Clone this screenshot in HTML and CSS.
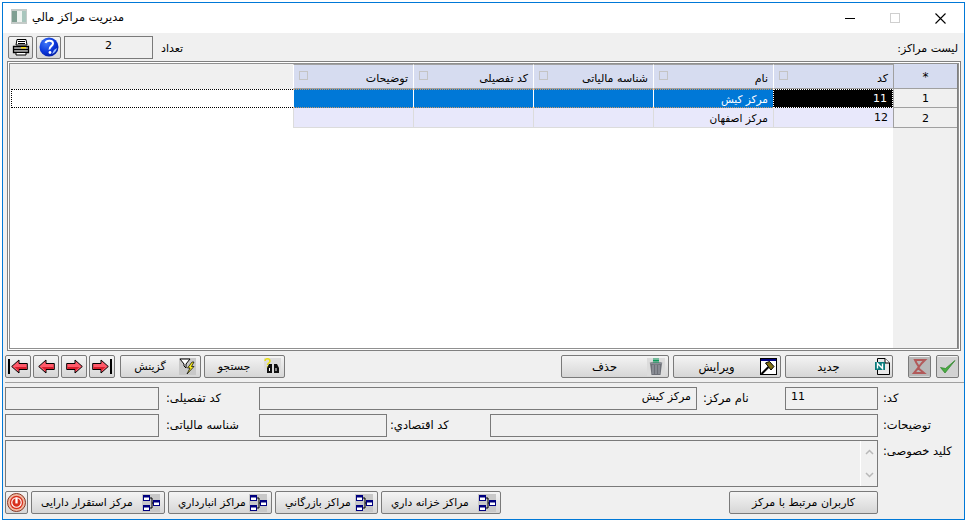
FILE: index.html
```html
<!DOCTYPE html>
<html lang="fa">
<head>
<meta charset="utf-8">
<title>مدیریت مراکز مالي</title>
<link rel="stylesheet" href="styles.css">
</head>
<body>
<svg class="defs" width="0" height="0" aria-hidden="true">
  <symbol id="tree" viewBox="0 0 18 18">
    <rect width="18" height="18" fill="#c8c8c8"/>
    <path d="M7 4H10V9H12M7 14H10V9" fill="none" stroke="#000"/>
    <rect x="1.500" y="1.500" width="6" height="5" fill="#fff" stroke="#00007f"/>
    <rect x="1.500" y="1.500" width="6" height="2" fill="#00007f"/>
    <rect x="11.500" y="6.500" width="6" height="5" fill="#fff" stroke="#00007f"/>
    <rect x="11.500" y="6.500" width="6" height="2" fill="#00007f"/>
    <rect x="1.500" y="11.500" width="6" height="5" fill="#fff" stroke="#00007f"/>
    <rect x="1.500" y="11.500" width="6" height="2" fill="#00007f"/>
  </symbol>
  <symbol id="arrow" viewBox="0 0 17 15">
    <path d="M.7 7.500L8 1V4.500H16.300V10.500H8V14Z" fill="#ff5a6a" stroke="#000"/>
    <path d="M3.500 8H15.500V10H8V12Z" fill="#d81f2d"/>
  </symbol>
</svg>
<div class="window">
  <header class="titlebar">
    <svg class="app-icon" width="16" height="15" viewBox="0 0 16 15"><rect width="16" height="15" fill="#c4cbc8"/><rect x="1" y="2" width="5" height="11" fill="#7f9f92"/><rect x="6" y="2" width="5" height="11" fill="#eef3f0"/><rect x="11" y="2" width="4" height="11" fill="#a8c6bd"/></svg>
    <span class="title">مدیریت مراکز مالي</span>
    <div class="caption">
      <span class="cap cap-min"></span>
      <span class="cap cap-max"></span>
      <svg class="cap-close" width="11" height="11" viewBox="0 0 11 11"><path d="M0.500 0.500L10.500 10.500M10.500 0.500L0.500 10.500" stroke="#000" stroke-width="1.100"/></svg>
    </div>
  </header>
  <main class="content">
    <div class="toolbar">
      <button class="btn tool">
        <svg width="18" height="18" viewBox="0 0 18 18"><path d="M5 1.500H14L15 7H4Z" fill="#fff" stroke="#000"/><path d="M6 3.500H13M6 5.500H13" stroke="#000"/><path d="M1.500 8.500H16.500V14.500H1.500Z" fill="#b4b4b4" stroke="#000" stroke-width="1.300"/><path d="M2 11.500H16" stroke="#000" stroke-width="1.300"/><rect x="9" y="9" width="5" height="1.500" fill="#f5d90a"/><path d="M4 14.500H14V17H4Z" fill="#fff" stroke="#000"/></svg>
      </button>
      <button class="btn tool">
        <svg width="20" height="20" viewBox="0 0 20 20"><defs><radialGradient id="globe" cx=".35" cy=".3" r=".8"><stop offset="0" stop-color="#3f78f8"/><stop offset=".6" stop-color="#0a34d8"/><stop offset="1" stop-color="#021a9a"/></radialGradient></defs><circle cx="10" cy="10" r="9.500" fill="url(#globe)"/><path d="M13 17A8 8 0 0 0 18 11L15 13Z" fill="#9fc0ff"/><path d="M6.500 6C7.500 2.800 14 3 14 6.500C14 9 10 9.500 10.500 12.500" fill="none" stroke="#fff" stroke-width="2"/><circle cx="11" cy="15.500" r="1.400" fill="#fff"/></svg>
      </button>
      <output class="count">2</output>
      <span class="count-label">تعداد</span>
      <span class="list-label">لیست مراکز:</span>
    </div>

    <section class="grid">
      <div class="rowhead">
        <div class="rh-corner">*</div>
        <div class="rh-cell rh-first">1</div>
        <div class="rh-cell rh-second">2</div>
      </div>
      <div class="table">
        <div class="cell th"><span>کد</span><i class="chk"></i></div>
        <div class="cell th"><span>نام</span><i class="chk"></i></div>
        <div class="cell th"><span>شناسه مالیاتی</span><i class="chk"></i></div>
        <div class="cell th"><span>کد تفصیلی</span><i class="chk"></i></div>
        <div class="cell th"><span>توضیحات</span><i class="chk"></i></div>
        <div class="th-empty"></div>

        <div class="cell sel-cur num">11</div>
        <div class="cell sel">مرکز کیش</div>
        <div class="cell sel"></div>
        <div class="cell sel"></div>
        <div class="cell sel"></div>
        <div class="row-focus"></div>

        <div class="cell alt num">12</div>
        <div class="cell alt">مرکز اصفهان</div>
        <div class="cell alt"></div>
        <div class="cell alt"></div>
        <div class="cell alt"></div>
      </div>
    </section>

    <div class="actions">
      <div class="group">
        <button class="btn nav"><svg width="20" height="15" viewBox="0 0 20 15"><rect x="0" y="0" width="2" height="15"/><use href="#arrow" x="3" width="17" height="15"/></svg></button>
        <button class="btn nav"><svg width="17" height="15"><use href="#arrow" width="17" height="15"/></svg></button>
        <button class="btn nav"><svg class="flip" width="17" height="15"><use href="#arrow" width="17" height="15"/></svg></button>
        <button class="btn nav"><svg class="flip" width="20" height="15" viewBox="0 0 20 15"><rect x="0" y="0" width="2" height="15"/><use href="#arrow" x="3" width="17" height="15"/></svg></button>
        <button class="btn wide filter">
          <span class="btn-text">گزینش</span>
          <svg width="17" height="17" viewBox="0 0 17 17"><rect width="17" height="17" fill="#c8c8c8"/><path d="M1 1H11L7 6V10L5 8V6Z" fill="#fff" stroke="#000"/><path d="M13 4L8.500 10H11L8 16L15 8.500H12.500L15 4Z" fill="#f7ea1e" stroke="#000" stroke-width=".7"/></svg>
        </button>
        <button class="btn wide search">
          <span class="btn-text">جستجو</span>
          <svg width="17" height="17" viewBox="0 0 17 17"><rect width="17" height="17" fill="#dcdcdc"/><path d="M1 3C1 0 6 0 6 3C6 5 3.500 5 3.500 7" fill="none" stroke="#e8df10" stroke-width="1.600"/><rect x="2.800" y="8" width="1.500" height="1.500" fill="#e8df10"/><path d="M5 6H8V15H3V10ZM10 6H13L15 10V15H10Z" fill="#111"/><path d="M5.500 10V13M12 10V13" stroke="#fff"/></svg>
        </button>
      </div>
      <div class="group">
        <button class="btn wide action">
          <span class="btn-text">حذف</span>
          <svg width="18" height="18" viewBox="0 0 18 18"><rect width="18" height="18" fill="#dcdcdc"/><path d="M3 5H15L13.500 17H4.500Z" fill="#6d7078"/><path d="M6 7V16M9 7V16M12 7V16" stroke="#a4a7ae"/><ellipse cx="9" cy="5" rx="6.500" ry="1.500" fill="#8c8f96"/><path d="M6 1H12M6 2.500H12M6 4H12" stroke="#0b9a5a"/></svg>
        </button>
        <button class="btn wide action">
          <span class="btn-text">ویرایش</span>
          <svg width="17" height="17" viewBox="0 0 17 17"><rect x=".5" y=".5" width="16" height="16" fill="#fff" stroke="#000"/><rect x="1" y="1" width="15" height="2" fill="#00007f"/><path d="M1.500 16L8.500 9" stroke="#000" stroke-width="2"/><path d="M5.500 5L9.500 3.500L14 8.500L11 12Z" fill="#7f6f12" stroke="#000"/></svg>
        </button>
        <button class="btn wide action act-new">
          <span class="btn-text">جدید</span>
          <svg width="15" height="17" viewBox="0 0 15 17"><path d="M2.500 .5H10L14.500 5V16.500H2.500Z" fill="#e8e8e8" stroke="#000"/><path d="M10 .5V5H14.500" fill="#fff" stroke="#000"/><rect x="0" y="4" width="10" height="8" fill="#0a7c7c"/><path d="M2.500 10.500V5.500L7.500 10.500V5.500" fill="none" stroke="#fff" stroke-width="1.400"/></svg>
        </button>
        <button class="btn square cancel">
          <svg width="21" height="19" viewBox="0 0 21 19"><rect width="21" height="19" fill="#b8b8b8"/><path d="M6 3H16L13 6L9 11L15 16H5L10 10L7.500 6Z" fill="none" stroke="#b25a5a" stroke-width="2"/></svg>
        </button>
        <button class="btn square">
          <svg width="21" height="19" viewBox="0 0 21 19"><rect width="21" height="19" fill="#d2d2d2"/><path d="M3.500 10.500L8 16L18 3.500L8.500 11.500Z" fill="#4aae42" stroke="#2c7f28" stroke-width=".7"/></svg>
        </button>
      </div>
    </div>

    <div class="form">
      <div class="form-row row-a">
        <span class="field f-detail"></span>
        <label class="lbl l-detail">کد تفصیلی:</label>
        <span class="field f-name">مرکز کیش</span>
        <label class="lbl l-name">نام مرکز:</label>
        <span class="field f-code">11</span>
        <label class="lbl l-side">کد:</label>
      </div>
      <div class="form-row row-b">
        <span class="field f-detail"></span>
        <label class="lbl l-detail">شناسه مالیاتی:</label>
        <span class="field f-eco"></span>
        <label class="lbl l-eco">کد اقتصادي:</label>
        <span class="field f-desc"></span>
        <label class="lbl l-side">توضیحات:</label>
      </div>
      <div class="form-row row-c">
        <div class="field f-key">
          <div class="scroll">
            <svg width="9" height="6" viewBox="0 0 9 6"><path d="M1 5L4.500 1.500L8 5" fill="none" stroke="#b8b8b8" stroke-width="1.500"/></svg>
            <svg width="9" height="6" viewBox="0 0 9 6"><path d="M1 1L4.500 4.500L8 1" fill="none" stroke="#b8b8b8" stroke-width="1.500"/></svg>
          </div>
        </div>
        <label class="lbl l-side">کلید خصوصی:</label>
      </div>
    </div>

    <div class="bottom">
      <button class="btn stop">
        <svg width="19" height="19" viewBox="0 0 20 20"><circle cx="10" cy="10" r="9.500" fill="#f2b8a0" stroke="#7f3020"/><circle cx="10" cy="10" r="7" fill="#d8301e"/><circle cx="10" cy="10" r="5" fill="none" stroke="#fff" stroke-width="1.200"/><path d="M10 5V11" stroke="#fff" stroke-width="2.400"/></svg>
      </button>
      <button class="btn center c1"><span class="btn-text">مرکز استقرار دارایی</span><svg width="18" height="18"><use href="#tree"/></svg></button>
      <button class="btn center c2"><span class="btn-text">مراکز انبارداري</span><svg width="18" height="18"><use href="#tree"/></svg></button>
      <button class="btn center c3"><span class="btn-text">مراکز بازرگاني</span><svg width="18" height="18"><use href="#tree"/></svg></button>
      <button class="btn center c4"><span class="btn-text">مراکز خزانه داري</span><svg width="18" height="18"><use href="#tree"/></svg></button>
      <button class="btn users">کاربران مرتبط با مرکز</button>
    </div>
  </main>
</div>
</body>
</html>
```

FILE: styles.css
```css
* { box-sizing: border-box; }

html, body {
  margin: 0;
  padding: 0;
  background: #fff;
  overflow: hidden;
}

body {
  width: 968px;
  height: 521px;
  padding: 2px 0 0 2px;
  font-family: "DejaVu Sans", "Noto Sans", sans-serif;
  font-size: 11px;
  color: #000;
}

.defs { position: absolute; }

.window {
  width: 963px;
  height: 518px;
  border: 1px solid #0078d7;
  display: flex;
  flex-direction: column;
  background: #f0f0f0;
}

.titlebar {
  height: 30px;
  flex: none;
  background: #fff;
  display: flex;
  align-items: center;
  padding-left: 8px;
  padding-bottom: 1px;
}

.app-icon { flex: none; margin-bottom: 2px; }

.title {
  margin-left: 5px;
  font-size: 11.300px;
  direction: rtl;
}

.caption {
  margin-left: auto;
  display: flex;
  align-items: center;
  padding-top: 1px;
  padding-right: 18px;
}

.cap-min {
  width: 10px;
  height: 1px;
  background: #000;
  margin-right: 35px;
}

.cap-max {
  width: 10px;
  height: 10px;
  border: 1px solid #cfcfcf;
  margin-right: 35px;
}

.content {
  flex: 1;
  padding: 0 3px 0 2px;
  min-height: 0;
}

.btn {
  display: flex;
  align-items: center;
  justify-content: center;
  height: 23px;
  padding: 0;
  border: 1px solid #7a7a7a;
  border-radius: 2px;
  background: linear-gradient(#f4f4f4, #d6d6d6);
  font: inherit;
  font-size: 11px;
  color: #000;
  direction: rtl;
  white-space: nowrap;
  flex: none;
}

.btn svg { flex: none; }

.toolbar {
  height: 28px;
  display: flex;
  align-items: center;
  padding-left: 3px;
  padding-right: 3px;
}

.tool {
  width: 25px;
  height: 23px;
  margin-right: 3px;
}

.count {
  width: 89px;
  height: 23px;
  border: 1px solid #7a7a7a;
  text-align: center;
  line-height: 18px;
}

.count-label {
  margin-left: 8px;
  margin-top: 2px;
  direction: rtl;
}

.list-label {
  margin-left: auto;
  margin-top: 2px;
  direction: rtl;
}

.grid {
  width: 954px;
  margin-left: 2px;
  height: 290px;
  border: 1px solid #808080;
  outline: 1px solid #909090;
  outline-offset: -3px;
  padding: 2px;
  display: flex;
  flex-direction: row-reverse;
  background: #fff;
}

.rowhead {
  width: 65px;
  flex: none;
  background: #f0f0f0;
  text-align: center;
  border-right: 1px solid #808080;
}

.rh-corner {
  height: 25px;
  background: #d6dcf0;
  line-height: 26px;
  border-bottom: 1px solid #a0a0a0;
  border-left: 1px solid #a0a0a0;
  font-size: 12px;
}

.rh-cell {
  border-bottom: 1px solid #a0a0a0;
  border-left: 1px solid #a0a0a0;
  line-height: 21px;
  background: #f0f0f0;
}

.rh-first { height: 19px; line-height: 20px; }
.rh-second { height: 20px; }

.table {
  flex: 1;
  display: grid;
  direction: rtl;
  grid-template-columns: repeat(5, 120px) 1fr;
  grid-template-rows: 25px 19px 20px;
  align-content: start;
}

.cell {
  border-left: 1px solid #dcdcdc;
  padding: 0 5px;
  display: flex;
  align-items: center;
  font-size: 10.500px;
  height: 100%;
}

.th {
  position: relative;
  background: #d6dcf0;
  border-left: 1px solid #fff;
  border-bottom: 1px solid #a0a0a0;
  border-top: 1px solid #a0a0a0;
  padding-top: 3px;
  font-size: 11px;
}

.chk {
  position: absolute;
  left: 5px;
  top: 6px;
  width: 9px;
  height: 9px;
  border: 1px solid #c4c4c4;
}

.th-empty {
  background: #f0f0f0;
}

.sel {
  background: #0078d7;
  color: #fff;
  border-left: 1px solid #fff;
  border-top: 1px dotted #c89868;
  border-bottom: 1px dotted #c89868;
}

.sel-cur {
  background: #000;
  color: #fff;
  border: 1px dotted #fff;
}

.num {
  font-size: 11px;
  direction: ltr;
  justify-content: flex-end;
}

.alt {
  background: #e8e8fb;
  border-bottom: 1px solid #dcdcdc;
}

.row-focus {
  margin-left: 1px;
  border-top: 1px dotted #000;
  border-bottom: 1px dotted #000;
  border-left: 1px dotted #000;
}

.actions {
  height: 32px;
  padding-top: 4px;
  margin-right: -3px;
  padding-right: 3px;
  display: flex;
  justify-content: space-between;
  border-bottom: 1px solid #a0a0a0;
}

.group {
  display: flex;
  align-items: flex-start;
}

.nav {
  width: 26px;
  margin-right: 2px;
}

.flip { transform: scaleX(-1); }

.wide {
  justify-content: flex-start;
  padding: 0;
  direction: ltr;
}

.wide svg { margin-left: auto; }

.filter {
  width: 81px;
  margin-left: 3px;
  margin-right: 3px;
  padding-right: 4px;
}

.filter .btn-text, .search .btn-text {
  width: 58px;
  text-align: center;
}

.search {
  width: 81px;
  padding-right: 3px;
}

.action {
  width: 108px;
  margin-right: 4px;
  padding-right: 3px;
}

.action .btn-text {
  width: 85px;
  text-align: center;
  font-size: 11.500px;
}

.act-new { padding-right: 2px; }

.square {
  width: 23px;
  margin-left: 5px;
}

.cancel { margin-left: 11px; }

.group:last-child { padding-right: 2px; }

.btn-text { direction: rtl; }

.form {
  padding-top: 4px;
}

.form-row {
  display: flex;
  align-items: flex-start;
}

.row-a { height: 27px; }
.row-b { height: 26px; }
.row-c { height: 51px; }

.field {
  display: block;
  height: 23px;
  border: 1px solid #7a7a7a;
  flex: none;
  line-height: 18px;
  padding: 0 5px;
  direction: rtl;
}

.lbl {
  direction: rtl;
  text-align: left;
  flex: none;
  padding-top: 4px;
  font-size: 11.500px;
}

.f-detail { width: 154px; }
.l-detail { width: 93px; margin-left: 7px; }
.f-name { width: 438px; }
.l-name { width: 82px; margin-left: 6px; }
.f-code { width: 93px; direction: ltr; text-align: left; }
.f-eco { width: 128px; }
.l-eco { width: 100px; margin-left: 3px; }
.f-desc { width: 388px; }
.l-side { width: 76px; margin-left: 5px; }

.f-key {
  width: 873px;
  height: 47px;
  position: relative;
  padding: 0;
}

.scroll {
  position: absolute;
  top: 0;
  right: 0;
  bottom: 0;
  width: 17px;
  border-left: 1px solid #fff;
  display: flex;
  flex-direction: column;
  justify-content: space-between;
  align-items: center;
  padding: 8px 0;
}

.bottom {
  display: flex;
  height: 23px;
  align-items: flex-start;
}

.stop { width: 23px; margin-right: 3px; }

.center {
  justify-content: space-between;
  padding: 0 4px 0 9px;
  direction: ltr;
  margin-right: 3px;
  font-size: 10.700px;
}

.c1 { width: 134px; }
.c2 { width: 104px; }
.c3 { width: 103px; }
.c4 { width: 120px; }

.users {
  width: 149px;
  margin-left: 225px;
}
```
